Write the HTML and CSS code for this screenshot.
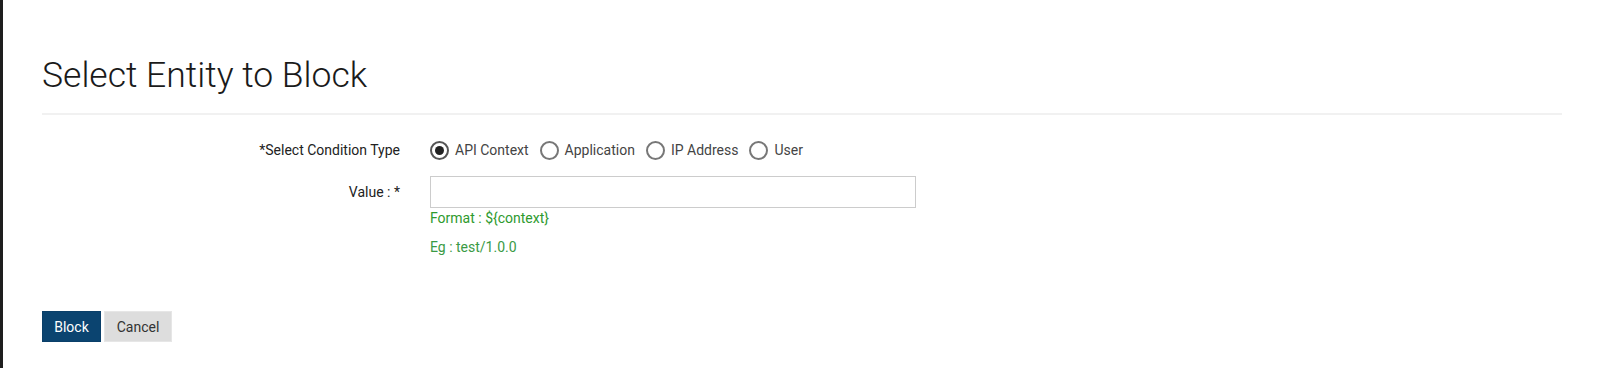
FILE: index.html
```html
<!DOCTYPE html>
<html>
<head>
<meta charset="utf-8">
<link rel="stylesheet" href="styles.css">
</head>
<body>
<div class="page">
  <h1 class="title">Select Entity to Block</h1>
  <form class="form">
    <div class="row">
      <label class="label">*Select Condition Type</label>
      <div class="control radios">
        <label class="radio"><span class="dot checked"></span>API Context</label>
        <label class="radio"><span class="dot"></span>Application</label>
        <label class="radio"><span class="dot"></span>IP Address</label>
        <label class="radio"><span class="dot"></span>User</label>
      </div>
    </div>
    <div class="row row-value">
      <label class="label label-value">Value : *</label>
      <div class="control">
        <div class="input"></div>
        <div class="help">Format : ${context}</div>
        <div class="help help-eg">Eg : test/1.0.0</div>
      </div>
    </div>
  </form>
  <div class="actions">
    <button type="button" class="btn btn-primary">Block</button>
    <button type="button" class="btn btn-default">Cancel</button>
  </div>
</div>
</body>
</html>
```
FILE: styles.css
```css
html, body {
  margin: 0;
  padding: 0;
  background: #fff;
}
body {
  font-family: Roboto, "Liberation Sans", sans-serif;
  color: #333;
  height: 368px;
  overflow: hidden;
  border-left: 3px solid #1e1e1e;
  box-sizing: border-box;
}
.page {
  padding: 0 38px 0 39px;
}
.title {
  margin: 0;
  padding-top: 52px;
  padding-bottom: 15px;
  font-size: 35.5px;
  font-weight: 300;
  line-height: 46px;
  color: #1a1a1a;
  border-bottom: 2px solid #f1f1f1;
}
.form {
  padding-top: 22px;
}
.row {
  display: flex;
  align-items: flex-start;
}
.label {
  width: 388px;
  flex: none;
  text-align: right;
  font-size: 14px;
  color: #222;
  line-height: 26px;
  padding-right: 30px;
  box-sizing: border-box;
}
.radios {
  display: flex;
  align-items: center;
  height: 26px;
}
.radio {
  display: flex;
  align-items: center;
  font-size: 14px;
  color: #444;
  margin-right: 11px;
}
.dot {
  width: 19px;
  height: 19px;
  border: 2px solid #777;
  border-radius: 50%;
  box-sizing: border-box;
  margin-right: 6px;
  position: relative;
  background: #fff;
}
.dot.checked {
  border-color: #555;
}
.dot.checked::after {
  content: "";
  position: absolute;
  left: 3px;
  top: 3px;
  width: 9px;
  height: 9px;
  border-radius: 50%;
  background: #222;
}
.row-value {
  margin-top: 13px;
}
.label-value {
  line-height: 32px;
}
.input {
  width: 486px;
  height: 32px;
  border: 1px solid #ccc;
  box-sizing: border-box;
  background: #fff;
}
.help {
  font-size: 14px;
  color: #2e9a2e;
  line-height: 18px;
  margin-top: 1px;
}
.help-eg {
  margin-top: 11px;
  color: #3a9a45;
}
.actions {
  display: flex;
  gap: 3px;
  margin-top: 55px;
}
.btn {
  font-family: Roboto, "Liberation Sans", sans-serif;
  font-size: 14px;
  height: 31px;
  padding: 0 11px;
  border: 1px solid transparent;
  border-radius: 0;
  cursor: pointer;
}
.btn-primary {
  background: #0b4470;
  border-color: #0a3f69;
  color: #fff;
  width: 59px;
}
.btn-default {
  background: #ddd;
  border-color: #e6e6e6;
  color: #333;
  width: 68px;
}
```
